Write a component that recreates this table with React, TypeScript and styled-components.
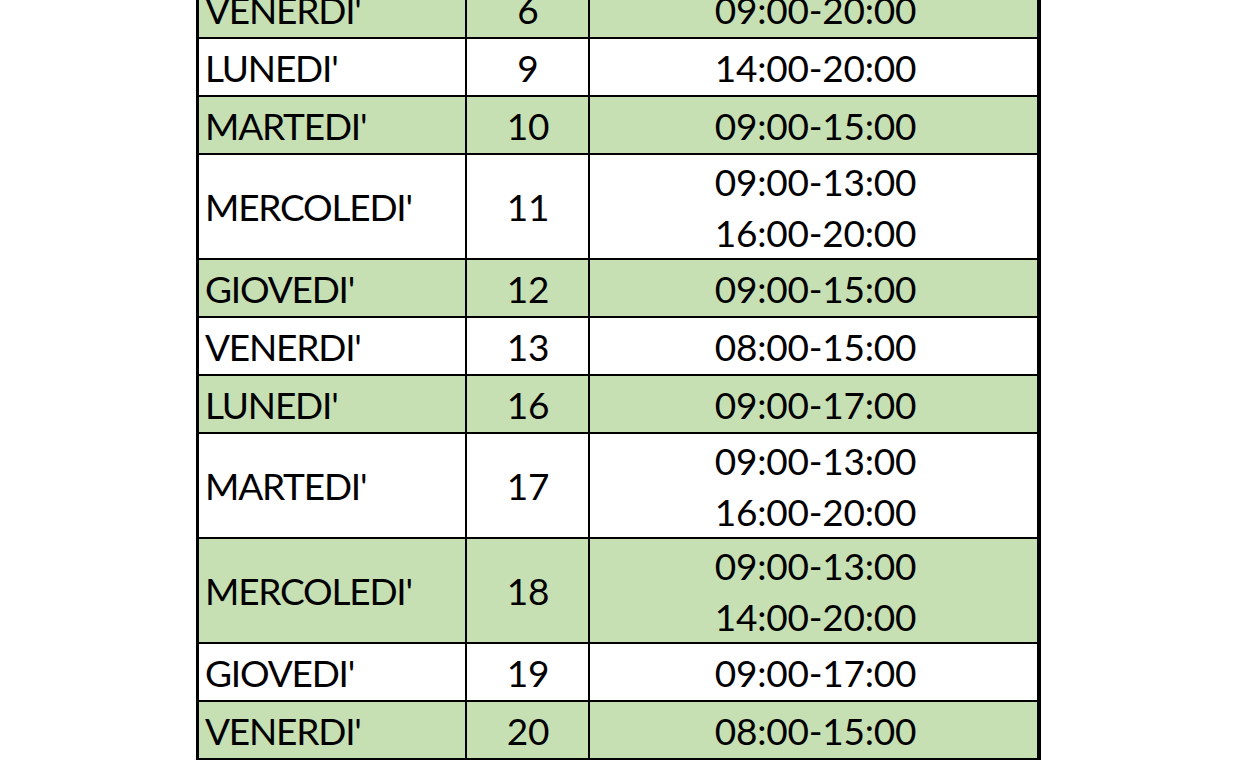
import React from "react";
import styled, { createGlobalStyle } from "styled-components";

const Global = createGlobalStyle`
  html, body {
    margin: 0;
    padding: 0;
    background: #ffffff;
    height: 760px;
    overflow: hidden;
  }
  body {
    font-family: Lato, "Open Sans", "Liberation Sans", sans-serif;
  }
`;

const Page = styled.div`
  width: 1240px;
  height: 760px;
  overflow: hidden;
  background: #ffffff;
  display: flex;
  justify-content: flex-start;
  padding-left: 196px;
  box-sizing: border-box;
`;

const Sheet = styled.div`
  width: 845px;
  height: fit-content;
  margin-top: -19px;
  display: grid;
  grid-template-columns: 266px 121px 447px;
  column-gap: 2px;
  row-gap: 2px;
  background: #000000;
  border-left: 3px solid #000000;
  border-right: 4px solid #000000;
  box-sizing: border-box;
`;

type Align = "left" | "center" | "time";

const Cell = styled.div<{ $green: boolean; $tall: boolean; $align: Align }>`
  background: ${(p) => (p.$green ? "#c6e0b4" : "#ffffff")};
  height: ${(p) => (p.$tall ? "103px" : "56px")};
  display: flex;
  flex-direction: column;
  justify-content: center;
  align-items: ${(p) => (p.$align === "left" ? "flex-start" : "center")};
  padding: 0 0 0 ${(p) => (p.$align === "left" ? "6px" : p.$align === "time" ? "4px" : "1px")};
  box-sizing: border-box;
  font-size: 37px;
  letter-spacing: ${(p) => (p.$align === "left" ? "-1.2px" : "-0.2px")};
  color: #000000;
  line-height: 51px;
  white-space: nowrap;
`;

const Line = styled.span`
  display: block;
`;

type Row = { day: string; num: string; times: string[]; green: boolean };

const rows: Row[] = [
  { day: "VENERDI'", num: "6", times: ["09:00-20:00"], green: true },
  { day: "LUNEDI'", num: "9", times: ["14:00-20:00"], green: false },
  { day: "MARTEDI'", num: "10", times: ["09:00-15:00"], green: true },
  { day: "MERCOLEDI'", num: "11", times: ["09:00-13:00", "16:00-20:00"], green: false },
  { day: "GIOVEDI'", num: "12", times: ["09:00-15:00"], green: true },
  { day: "VENERDI'", num: "13", times: ["08:00-15:00"], green: false },
  { day: "LUNEDI'", num: "16", times: ["09:00-17:00"], green: true },
  { day: "MARTEDI'", num: "17", times: ["09:00-13:00", "16:00-20:00"], green: false },
  { day: "MERCOLEDI'", num: "18", times: ["09:00-13:00", "14:00-20:00"], green: true },
  { day: "GIOVEDI'", num: "19", times: ["09:00-17:00"], green: false },
  { day: "VENERDI'", num: "20", times: ["08:00-15:00"], green: true },
  { day: "", num: "", times: [""], green: false },
];

export default function App() {
  return (
    <Page>
      <Global />
      <Sheet>
        {rows.map((r, i) => {
          const tall = r.times.length > 1;
          return (
            <React.Fragment key={i}>
              <Cell $green={r.green} $tall={tall} $align="left">
                {r.day}
              </Cell>
              <Cell $green={r.green} $tall={tall} $align="center">
                {r.num}
              </Cell>
              <Cell $green={r.green} $tall={tall} $align="time">
                {r.times.map((t, j) => (
                  <Line key={j}>{t}</Line>
                ))}
              </Cell>
            </React.Fragment>
          );
        })}
      </Sheet>
    </Page>
  );
}
